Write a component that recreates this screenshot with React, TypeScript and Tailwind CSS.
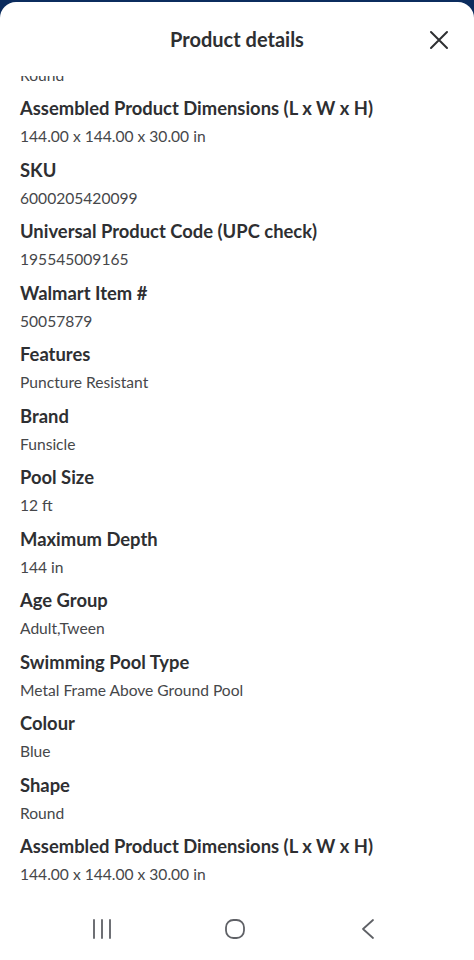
import React from 'react';

const details: { label: string; value: string }[] = [
  { label: 'Assembled Product Dimensions (L x W x H)', value: '144.00 x 144.00 x 30.00 in' },
  { label: 'SKU', value: '6000205420099' },
  { label: 'Universal Product Code (UPC check)', value: '195545009165' },
  { label: 'Walmart Item #', value: '50057879' },
  { label: 'Features', value: 'Puncture Resistant' },
  { label: 'Brand', value: 'Funsicle' },
  { label: 'Pool Size', value: '12 ft' },
  { label: 'Maximum Depth', value: '144 in' },
  { label: 'Age Group', value: 'Adult,Tween' },
  { label: 'Swimming Pool Type', value: 'Metal Frame Above Ground Pool' },
  { label: 'Colour', value: 'Blue' },
  { label: 'Shape', value: 'Round' },
  { label: 'Assembled Product Dimensions (L x W x H)', value: '144.00 x 144.00 x 30.00 in' },
];

const DetailRow = ({ label, value }: { label: string; value: string }) => (
  <div className="flex flex-col gap-[5px] pt-[10.5px]">
    <div className="text-[18.4px] leading-[24px] font-bold text-[#2e2f32]">{label}</div>
    <div className="text-[15.6px] leading-[22px] text-[#46474a]">{value}</div>
  </div>
);

export default function App() {
  return (
    <div className="w-[474px] h-[960px] bg-[#0b2c5e] pt-[2px] overflow-hidden" style={{ fontFamily: 'Lato, "Noto Sans", sans-serif' }}>
      <div className="h-[958px] bg-white rounded-t-2xl flex flex-col">
        {/* header */}
        <div className="h-[74px] shrink-0 relative">
          <h1 className="text-center text-[20px] leading-[28px] font-bold text-[#2e2f32] pt-[23px]">Product details</h1>
          <button className="absolute right-[24px] top-[27px] text-[#2e2f32]" aria-label="Close">
            <svg width="22" height="22" viewBox="0 0 22 22" fill="none" stroke="currentColor" strokeWidth="2" strokeLinecap="round">
              <path d="M3 3L19 19M19 3L3 19" />
            </svg>
          </button>
        </div>

        {/* scrolled list */}
        <div className="flex-1 overflow-hidden px-5">
          <div className="-mt-[12.5px]">
            <div className="text-[15.6px] leading-[22px] text-[#46474a]">Round</div>
            {details.map((d, i) => (
              <DetailRow key={i} label={d.label} value={d.value} />
            ))}
          </div>
        </div>

        {/* system nav bar */}
        <div className="h-[59px] shrink-0 flex items-center pl-[91px] pb-[3px] text-[#5f6166]">
          <svg width="22" height="20" viewBox="0 0 22 20" fill="none" stroke="currentColor" strokeWidth="1.8" strokeLinecap="round">
            <path d="M3 1V19M11 1V19M19 1V19" />
          </svg>
          <svg className="ml-[111px]" width="22" height="22" viewBox="0 0 22 22" fill="none" stroke="currentColor" strokeWidth="1.8">
            <rect x="2" y="2" width="18" height="18" rx="7.5" />
          </svg>
          <svg className="ml-[114px]" width="16" height="22" viewBox="0 0 16 22" fill="none" stroke="currentColor" strokeWidth="1.8" strokeLinecap="round" strokeLinejoin="round">
            <path d="M13 2L3 11L13 20" />
          </svg>
        </div>
      </div>
    </div>
  );
}
